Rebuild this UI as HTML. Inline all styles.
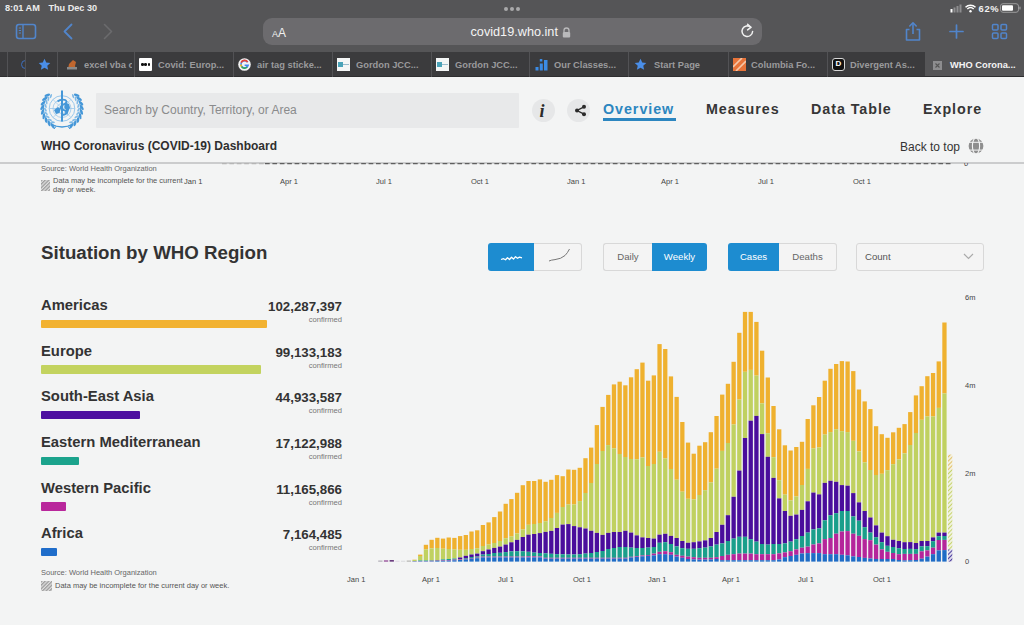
<!DOCTYPE html>
<html><head><meta charset="utf-8">
<style>
*{margin:0;padding:0;box-sizing:border-box}
html,body{width:1024px;height:625px;overflow:hidden;background:#f3f4f4;font-family:"Liberation Sans",sans-serif}
.a{position:absolute;white-space:nowrap;line-height:1}
.tb{position:absolute;top:52px;height:25px;width:1px;background:#525255}
.tt{position:absolute;top:60.5px;font-size:9.3px;font-weight:bold;color:#9a9a9c;line-height:1;white-space:nowrap}
.nav{position:absolute;top:102px;font-size:14.3px;font-weight:bold;color:#363636;letter-spacing:0.95px;line-height:1;white-space:nowrap}
.xl{position:absolute;font-size:7.5px;color:#444;line-height:1;white-space:nowrap}
.rn{position:absolute;left:41px;font-size:14.8px;font-weight:bold;color:#333;line-height:1;white-space:nowrap}
.rv{position:absolute;right:682px;font-size:13.3px;font-weight:bold;color:#333;line-height:1;white-space:nowrap}
.rc{position:absolute;right:682px;font-size:7.6px;color:#777;line-height:1;white-space:nowrap}
.bar{position:absolute;left:41px;height:8.5px;border-radius:1px}
.btn{position:absolute;top:242.5px;height:28px;font-size:9.6px;line-height:28px;text-align:center;color:#666}
</style></head><body>
<!-- ===== Safari chrome ===== -->
<div style="position:absolute;left:0;top:0;width:1024px;height:52px;background:#555557"></div>
<div class="a" style="left:5px;top:3.5px;font-size:9.2px;font-weight:bold;color:#ececec">8:01 AM</div>
<div class="a" style="left:48.5px;top:3.5px;font-size:9.1px;font-weight:bold;color:#ececec">Thu Dec 30</div>
<div style="position:absolute;left:504px;top:7px;width:4px;height:4px;border-radius:50%;background:#a9a9ab"></div>
<div style="position:absolute;left:510px;top:7px;width:4px;height:4px;border-radius:50%;background:#a9a9ab"></div>
<div style="position:absolute;left:516px;top:7px;width:4px;height:4px;border-radius:50%;background:#a9a9ab"></div>
<!-- sidebar icon -->
<svg style="position:absolute;left:15px;top:23px" width="23" height="18" viewBox="0 0 23 18"><rect x="1.5" y="1.5" width="19" height="14" rx="2.5" fill="none" stroke="#5185cb" stroke-width="1.6"/><line x1="8" y1="1.5" x2="8" y2="15.5" stroke="#5185cb" stroke-width="1.4"/><line x1="3.8" y1="5" x2="6" y2="5" stroke="#5185cb" stroke-width="1"/><line x1="3.8" y1="7.5" x2="6" y2="7.5" stroke="#5185cb" stroke-width="1"/><line x1="3.8" y1="10" x2="6" y2="10" stroke="#5185cb" stroke-width="1"/></svg>
<svg style="position:absolute;left:62px;top:23px" width="12" height="17" viewBox="0 0 12 17"><polyline points="9.5,1.5 2.5,8.5 9.5,15.5" fill="none" stroke="#5185cb" stroke-width="1.8" stroke-linecap="round" stroke-linejoin="round"/></svg>
<svg style="position:absolute;left:102px;top:23px" width="12" height="17" viewBox="0 0 12 17"><polyline points="2.5,1.5 9.5,8.5 2.5,15.5" fill="none" stroke="#6b6b6d" stroke-width="1.6" stroke-linecap="round" stroke-linejoin="round"/></svg>
<!-- url -->
<div style="position:absolute;left:263px;top:18px;width:499px;height:27px;border-radius:9px;background:#6c6b6e"></div>
<div class="a" style="left:272px;top:27.5px;font-size:9px;color:#f0f0f0;line-height:11px">A<span style="font-size:12px">A</span></div>
<div class="a" style="left:470.5px;top:25.5px;font-size:12.7px;color:#f4f4f4">covid19.who.int</div>
<svg style="position:absolute;left:562px;top:26.5px" width="9" height="11" viewBox="0 0 9 11"><path d="M2 5V3.5a2.5 2.5 0 0 1 5 0V5" fill="none" stroke="#b9b9bb" stroke-width="1.3"/><rect x="0.8" y="5" width="7.4" height="5.5" rx="1" fill="#b9b9bb"/></svg>
<svg style="position:absolute;left:740px;top:23px" width="15" height="16" viewBox="0 0 15 16"><path d="M10.8 4.2A5.3 5.3 0 1 0 12.6 8.5" fill="none" stroke="#f0f0f0" stroke-width="1.5" stroke-linecap="round"/><polyline points="7.6,1.2 10.9,4.3 7.6,6.9" fill="none" stroke="#f0f0f0" stroke-width="1.5" stroke-linecap="round" stroke-linejoin="round"/></svg>
<!-- right icons -->
<svg style="position:absolute;left:903px;top:21px" width="20" height="21" viewBox="0 0 20 21"><path d="M6.5 8.5H3.5V19H16.5V8.5H13.5" fill="none" stroke="#5185cb" stroke-width="1.6" stroke-linejoin="round"/><line x1="10" y1="2" x2="10" y2="13" stroke="#5185cb" stroke-width="1.6"/><polyline points="6.8,5 10,1.8 13.2,5" fill="none" stroke="#5185cb" stroke-width="1.6" stroke-linecap="round" stroke-linejoin="round"/></svg>
<svg style="position:absolute;left:949px;top:24px" width="15" height="15" viewBox="0 0 15 15"><line x1="7.5" y1="1" x2="7.5" y2="14" stroke="#5185cb" stroke-width="1.7" stroke-linecap="round"/><line x1="1" y1="7.5" x2="14" y2="7.5" stroke="#5185cb" stroke-width="1.7" stroke-linecap="round"/></svg>
<svg style="position:absolute;left:991px;top:23px" width="17" height="17" viewBox="0 0 17 17"><rect x="1.5" y="1.5" width="5.5" height="5.5" rx="1" fill="none" stroke="#5185cb" stroke-width="1.5"/><rect x="10" y="1.5" width="5.5" height="5.5" rx="1" fill="none" stroke="#5185cb" stroke-width="1.5"/><rect x="1.5" y="10" width="5.5" height="5.5" rx="1" fill="none" stroke="#5185cb" stroke-width="1.5"/><rect x="10" y="10" width="5.5" height="5.5" rx="1" fill="none" stroke="#5185cb" stroke-width="1.5"/></svg>
<!-- status right -->
<svg style="position:absolute;left:949px;top:3px" width="72" height="10" viewBox="0 0 72 10"><rect x="1.5" y="6" width="2" height="3.5" fill="#fff"/><rect x="4.5" y="4.5" width="2" height="5" fill="#8e8e90"/><rect x="7.5" y="3" width="2" height="6.5" fill="#8e8e90"/><rect x="10.5" y="1.5" width="2" height="8" fill="#8e8e90"/>
<path d="M16.5 4.2a7.5 7.5 0 0 1 10 0" fill="none" stroke="#fff" stroke-width="1.5"/><path d="M18.3 6a4.8 4.8 0 0 1 6.4 0" fill="none" stroke="#fff" stroke-width="1.5"/><circle cx="21.5" cy="8.3" r="1.2" fill="#fff"/>
<rect x="51.5" y="0.7" width="18" height="8.6" rx="2.5" fill="none" stroke="#9a9a9c" stroke-width="1"/><rect x="53" y="2.2" width="11" height="5.6" rx="1" fill="#fff"/><rect x="70.3" y="3.5" width="1.3" height="3" rx="0.6" fill="#9a9a9c"/></svg>
<div class="a" style="left:978.5px;top:3.8px;font-size:9.4px;font-weight:bold;color:#f2f2f2;letter-spacing:0.7px">62%</div>
<!-- ===== tab bar ===== -->
<div style="position:absolute;left:0;top:52px;width:1024px;height:25px;background:#3b3b3d"></div>
<div style="position:absolute;left:925px;top:52px;width:99px;height:25px;background:#555557"></div>
<div style="position:absolute;left:0;top:76px;width:1024px;height:1px;background:#2e2e30"></div>
<div class="tb" style="left:7px"></div><div class="tb" style="left:25px"></div><div class="tb" style="left:57px"></div><div class="tb" style="left:134px"></div><div class="tb" style="left:233px"></div><div class="tb" style="left:332px"></div><div class="tb" style="left:431px"></div><div class="tb" style="left:529px"></div><div class="tb" style="left:628px"></div><div class="tb" style="left:728px"></div><div class="tb" style="left:827px"></div>
<!-- tab icons -->
<div style="position:absolute;left:8px;top:52px;width:17px;height:25px;overflow:hidden"><div style="position:absolute;left:13px;top:8px;width:9px;height:9px;border-radius:50%;border:1.5px solid #3c6fc0"></div></div>
<svg style="position:absolute;left:38px;top:58px" width="13" height="13" viewBox="0 0 24 24"><path d="M12 1.5l3.2 6.9 7.5.8-5.6 5.1 1.6 7.4L12 17.9l-6.7 3.8 1.6-7.4L1.3 9.2l7.5-.8z" fill="#4a8ee8"/></svg>
<svg style="position:absolute;left:66px;top:58px" width="12" height="12" viewBox="0 0 12 12"><path d="M2 11 L3 6 L7 2 L10 4 L9 8 L10 11Z" fill="#c0662e"/><rect x="1" y="9" width="10" height="2.5" fill="#8a8a8a"/></svg>
<div style="position:absolute;left:139px;top:58px;width:13px;height:13px;background:#fff;border-radius:1px"><span style="position:absolute;left:2px;top:5px;width:2.5px;height:2.5px;background:#111;border-radius:50%"></span><span style="position:absolute;left:5.3px;top:5px;width:2.5px;height:2.5px;background:#111;border-radius:50%"></span><span style="position:absolute;left:8.6px;top:5px;width:2.5px;height:2.5px;background:#111;border-radius:50%"></span></div>
<svg style="position:absolute;left:238px;top:58px" width="13" height="13" viewBox="0 0 13 13"><circle cx="6.5" cy="6.5" r="6.3" fill="#f2f2f2"/><path d="M9.6 4.2A3.6 3.6 0 1 0 10.1 7.2H6.6" fill="none" stroke="#4285f4" stroke-width="1.6"/><path d="M3.1 4.6A3.6 3.6 0 0 1 9.6 4.2" fill="none" stroke="#ea4335" stroke-width="1.6"/><path d="M2.9 6.5A3.6 3.6 0 0 0 3.5 8.6" fill="none" stroke="#fbbc05" stroke-width="1.6"/><path d="M3.5 8.6A3.6 3.6 0 0 0 9.2 9" fill="none" stroke="#34a853" stroke-width="1.6"/></svg>
<div style="position:absolute;left:337px;top:58px;width:13px;height:13px;background:#f4f6f6"><span style="position:absolute;left:1px;top:4px;width:5px;height:5px;background:#4aa3b8"></span><span style="position:absolute;left:6px;top:6px;width:6px;height:1px;background:#9bc"></span></div>
<div style="position:absolute;left:436px;top:58px;width:13px;height:13px;background:#f4f6f6"><span style="position:absolute;left:1px;top:4px;width:5px;height:5px;background:#4aa3b8"></span><span style="position:absolute;left:6px;top:6px;width:6px;height:1px;background:#9bc"></span></div>
<svg style="position:absolute;left:535px;top:58px" width="13" height="13" viewBox="0 0 13 13"><rect x="0.5" y="9" width="3" height="3.5" fill="#3b8be6"/><rect x="4.8" y="5.5" width="3" height="7" fill="#3b8be6"/><rect x="9" y="2" width="3.5" height="10.5" fill="#3b8be6"/><rect x="4.8" y="1" width="2.5" height="2.5" fill="#3b8be6"/></svg>
<svg style="position:absolute;left:634px;top:58px" width="13" height="13" viewBox="0 0 24 24"><path d="M12 1.5l3.2 6.9 7.5.8-5.6 5.1 1.6 7.4L12 17.9l-6.7 3.8 1.6-7.4L1.3 9.2l7.5-.8z" fill="#4a8ee8"/></svg>
<svg style="position:absolute;left:733px;top:58px" width="13" height="13" viewBox="0 0 13 13"><rect width="13" height="13" fill="#e8743a"/><path d="M0 9L9 0M3 13L13 3" stroke="#f6c7a8" stroke-width="1.6"/></svg>
<div style="position:absolute;left:832px;top:58px;width:13px;height:13px;border:1.5px solid #d8d8d8;border-radius:3px;background:#111;color:#fff;font-size:8px;font-weight:bold;line-height:10px;text-align:center">D</div>
<div style="position:absolute;left:933px;top:61px;width:9px;height:9px;background:#8d8d8f"><svg style="position:absolute;left:0;top:0" width="9" height="9"><path d="M2.5 2.5L6.5 6.5M6.5 2.5L2.5 6.5" stroke="#555" stroke-width="1.1"/></svg></div>
<!-- tab texts -->
<div style="position:absolute;left:84px;top:52px;width:48px;height:25px;overflow:hidden"><div class="tt" style="left:0;top:8.5px">excel vba c</div></div>
<div class="tt" style="left:158px">Covid: Europ...</div>
<div class="tt" style="left:257px">air tag sticke...</div>
<div class="tt" style="left:356px">Gordon JCC...</div>
<div class="tt" style="left:455px">Gordon JCC...</div>
<div class="tt" style="left:554px">Our Classes...</div>
<div class="tt" style="left:654px">Start Page</div>
<div class="tt" style="left:751px">Columbia Fo...</div>
<div class="tt" style="left:850px">Divergent As...</div>
<div class="tt" style="left:950px;color:#f4f4f4">WHO Corona...</div>
<!-- ===== page header ===== -->
<svg style="position:absolute;left:39px;top:89px" width="46" height="41" viewBox="0 0 46 41">
<g fill="none" stroke="#8fc2ea">
<circle cx="23" cy="19.5" r="12.8" stroke-width="0.9"/><circle cx="23" cy="19.5" r="9" stroke-width="0.7"/><circle cx="23" cy="19.5" r="5" stroke-width="0.7"/>
<line x1="10.2" y1="19.5" x2="35.8" y2="19.5" stroke-width="0.7"/><line x1="14" y1="10.5" x2="32" y2="28.5" stroke-width="0.6"/><line x1="32" y1="10.5" x2="14" y2="28.5" stroke-width="0.6"/>
</g>
<path d="M16.67 36.88 L15.85 36.56 L15.04 36.20 L14.24 35.80 L13.47 35.36 L12.72 34.88 L12.00 34.37 L11.29 33.83 L10.62 33.25 L9.98 32.64 L9.36 32.00 L8.78 31.33 L8.23 30.63 L7.71 29.91 L7.23 29.17 L6.78 28.40 L6.37 27.61 L6.00 26.80 L5.67 25.98 L5.38 25.14 L5.13 24.29 L4.92 23.43 L4.75 22.55 L4.63 21.67 L4.55 20.79 L4.50 19.90 L4.51 19.02 L4.55 18.13 L4.64 17.25 L4.77 16.37 L4.94 15.50 L5.15 14.63 L5.41 13.78 L5.70 12.95 L6.03 12.12 L6.41 11.32 L6.82 10.53 L7.27 9.77 L7.75 9.02 L8.27 8.30 L8.83 7.61" fill="none" stroke="#4597d8" stroke-width="1"/><ellipse cx="13.70" cy="36.98" rx="3" ry="1.25" transform="rotate(-124.0 13.70 36.98)" fill="#4597d8"/><ellipse cx="13.72" cy="33.26" rx="2.2" ry="0.9" transform="rotate(-174.0 13.72 33.26)" fill="#7fb9e6"/><ellipse cx="10.01" cy="34.44" rx="3" ry="1.25" transform="rotate(-111.0 10.01 34.44)" fill="#4597d8"/><ellipse cx="10.86" cy="30.82" rx="2.2" ry="0.9" transform="rotate(-161.0 10.86 30.82)" fill="#7fb9e6"/><ellipse cx="6.98" cy="31.14" rx="3" ry="1.25" transform="rotate(-98.0 6.98 31.14)" fill="#4597d8"/><ellipse cx="8.62" cy="27.80" rx="2.2" ry="0.9" transform="rotate(-148.0 8.62 27.80)" fill="#7fb9e6"/><ellipse cx="4.77" cy="27.24" rx="3" ry="1.25" transform="rotate(-85.0 4.77 27.24)" fill="#4597d8"/><ellipse cx="7.13" cy="24.35" rx="2.2" ry="0.9" transform="rotate(-135.0 7.13 24.35)" fill="#7fb9e6"/><ellipse cx="3.50" cy="22.94" rx="3" ry="1.25" transform="rotate(-72.0 3.50 22.94)" fill="#4597d8"/><ellipse cx="6.44" cy="20.66" rx="2.2" ry="0.9" transform="rotate(-122.0 6.44 20.66)" fill="#7fb9e6"/><ellipse cx="3.23" cy="18.46" rx="3" ry="1.25" transform="rotate(-59.0 3.23 18.46)" fill="#4597d8"/><ellipse cx="6.60" cy="16.90" rx="2.2" ry="0.9" transform="rotate(-109.0 6.60 16.90)" fill="#7fb9e6"/><ellipse cx="3.97" cy="14.04" rx="3" ry="1.25" transform="rotate(-46.0 3.97 14.04)" fill="#4597d8"/><ellipse cx="7.61" cy="13.28" rx="2.2" ry="0.9" transform="rotate(-96.0 7.61 13.28)" fill="#7fb9e6"/><ellipse cx="5.68" cy="9.90" rx="3" ry="1.25" transform="rotate(-33.0 5.68 9.90)" fill="#4597d8"/><ellipse cx="9.40" cy="9.98" rx="2.2" ry="0.9" transform="rotate(-83.0 9.40 9.98)" fill="#7fb9e6"/><ellipse cx="8.29" cy="6.25" rx="3" ry="1.25" transform="rotate(-20.0 8.29 6.25)" fill="#4597d8"/><ellipse cx="11.89" cy="7.16" rx="2.2" ry="0.9" transform="rotate(-70.0 11.89 7.16)" fill="#7fb9e6"/><path d="M29.33 36.88 L30.15 36.56 L30.96 36.20 L31.76 35.80 L32.53 35.36 L33.28 34.88 L34.00 34.37 L34.71 33.83 L35.38 33.25 L36.02 32.64 L36.64 32.00 L37.22 31.33 L37.77 30.63 L38.29 29.91 L38.77 29.17 L39.22 28.40 L39.63 27.61 L40.00 26.80 L40.33 25.98 L40.62 25.14 L40.87 24.29 L41.08 23.43 L41.25 22.55 L41.37 21.67 L41.45 20.79 L41.50 19.90 L41.49 19.02 L41.45 18.13 L41.36 17.25 L41.23 16.37 L41.06 15.50 L40.85 14.63 L40.59 13.78 L40.30 12.95 L39.97 12.12 L39.59 11.32 L39.18 10.53 L38.73 9.77 L38.25 9.02 L37.73 8.30 L37.17 7.61" fill="none" stroke="#4597d8" stroke-width="1"/><ellipse cx="32.30" cy="36.98" rx="3" ry="1.25" transform="rotate(-56.0 32.30 36.98)" fill="#4597d8"/><ellipse cx="32.28" cy="33.26" rx="2.2" ry="0.9" transform="rotate(-6.0 32.28 33.26)" fill="#7fb9e6"/><ellipse cx="35.99" cy="34.44" rx="3" ry="1.25" transform="rotate(-69.0 35.99 34.44)" fill="#4597d8"/><ellipse cx="35.14" cy="30.82" rx="2.2" ry="0.9" transform="rotate(-19.0 35.14 30.82)" fill="#7fb9e6"/><ellipse cx="39.02" cy="31.14" rx="3" ry="1.25" transform="rotate(-82.0 39.02 31.14)" fill="#4597d8"/><ellipse cx="37.38" cy="27.80" rx="2.2" ry="0.9" transform="rotate(-32.0 37.38 27.80)" fill="#7fb9e6"/><ellipse cx="41.23" cy="27.24" rx="3" ry="1.25" transform="rotate(-95.0 41.23 27.24)" fill="#4597d8"/><ellipse cx="38.87" cy="24.35" rx="2.2" ry="0.9" transform="rotate(-45.0 38.87 24.35)" fill="#7fb9e6"/><ellipse cx="42.50" cy="22.94" rx="3" ry="1.25" transform="rotate(-108.0 42.50 22.94)" fill="#4597d8"/><ellipse cx="39.56" cy="20.66" rx="2.2" ry="0.9" transform="rotate(-58.0 39.56 20.66)" fill="#7fb9e6"/><ellipse cx="42.77" cy="18.46" rx="3" ry="1.25" transform="rotate(-121.0 42.77 18.46)" fill="#4597d8"/><ellipse cx="39.40" cy="16.90" rx="2.2" ry="0.9" transform="rotate(-71.0 39.40 16.90)" fill="#7fb9e6"/><ellipse cx="42.03" cy="14.04" rx="3" ry="1.25" transform="rotate(-134.0 42.03 14.04)" fill="#4597d8"/><ellipse cx="38.39" cy="13.28" rx="2.2" ry="0.9" transform="rotate(-84.0 38.39 13.28)" fill="#7fb9e6"/><ellipse cx="40.32" cy="9.90" rx="3" ry="1.25" transform="rotate(-147.0 40.32 9.90)" fill="#4597d8"/><ellipse cx="36.60" cy="9.98" rx="2.2" ry="0.9" transform="rotate(-97.0 36.60 9.98)" fill="#7fb9e6"/><ellipse cx="37.71" cy="6.25" rx="3" ry="1.25" transform="rotate(-160.0 37.71 6.25)" fill="#4597d8"/><ellipse cx="34.11" cy="7.16" rx="2.2" ry="0.9" transform="rotate(-110.0 34.11 7.16)" fill="#7fb9e6"/>
<g fill="#4597d8">
<path d="M15 21l4-3 2.5 2-1 4-3.5 1zM26 13.5l4 1.5 1 3.5-1.2 3-1.6 4.5-2-2 .5-3.5-1.5-2z"/>
<rect x="22" y="1.5" width="2" height="31"/>
<path d="M18.5 12.5c3-2.5 8.5-2.8 9 .2c.4 2.6-6 3-6 5.8c0 2.6 6 2.2 6 4.8c0 2-3 2.7-5.5 2.7" fill="none" stroke="#4597d8" stroke-width="1.8"/>
<path d="M12 35.5c4 1.5 7 2.2 11 2.5c4-.3 7-1 11-2.5" fill="none" stroke="#4597d8" stroke-width="1.3"/>
<path d="M17 37.5l-2 2.5M29 37.5l2 2.5" stroke="#4597d8" stroke-width="1"/>
</g>
</svg>
<div style="position:absolute;left:96px;top:92.5px;width:423px;height:35px;background:#e8e9ea;border-radius:1px"></div>
<div class="a" style="left:104px;top:104px;font-size:12px;color:#8a8b8c">Search by Country, Territory, or Area</div>
<div style="position:absolute;left:531.5px;top:99px;width:23px;height:23px;border-radius:50%;background:#e6e7e8"></div>
<div class="a" style="left:539.5px;top:102px;font-family:'Liberation Serif',serif;font-style:italic;font-weight:bold;font-size:18px;color:#2b2b2b">i</div>
<div style="position:absolute;left:567px;top:99px;width:23px;height:23px;border-radius:50%;background:#e6e7e8"></div>
<svg style="position:absolute;left:573.5px;top:103.5px" width="13" height="13" viewBox="0 0 13 13"><circle cx="10" cy="2.8" r="2" fill="#2b2b2b"/><circle cx="3" cy="6.5" r="2" fill="#2b2b2b"/><circle cx="10" cy="10.2" r="2" fill="#2b2b2b"/><path d="M10 2.8L3 6.5L10 10.2" fill="none" stroke="#2b2b2b" stroke-width="1.4"/></svg>
<div class="nav" style="left:603px;color:#2c86c0">Overview</div>
<div style="position:absolute;left:603px;top:118px;width:73px;height:2.5px;background:#2c86c0"></div>
<div class="nav" style="left:706px">Measures</div>
<div class="nav" style="left:811px">Data Table</div>
<div class="nav" style="left:923px">Explore</div>
<div class="a" style="left:41px;top:140px;font-size:12px;font-weight:bold;color:#2f2f2f">WHO Coronavirus (COVID-19) Dashboard</div>
<div class="a" style="left:900px;top:140.5px;font-size:12px;color:#333">Back to top</div>
<svg style="position:absolute;left:968px;top:138px" width="16" height="16" viewBox="0 0 16 16"><circle cx="8" cy="8" r="7.4" fill="#8e8e8e"/><ellipse cx="8" cy="8" rx="3.6" ry="8" fill="none" stroke="#f3f4f4" stroke-width="1.1"/><line x1="0" y1="4.3" x2="16" y2="4.3" stroke="#f3f4f4" stroke-width="1"/><line x1="0" y1="12.1" x2="16" y2="12.1" stroke="#f3f4f4" stroke-width="1"/></svg>
<!-- header bottom line & previous chart remnant -->
<div style="position:absolute;left:0;top:162px;width:1024px;height:1.8px;background:#cbcccd"></div>
<svg style="position:absolute;left:0;top:160.5px" width="1024" height="8"><line x1="222" y1="2.6" x2="265" y2="2.6" stroke="#b5b5b5" stroke-width="1.4" stroke-dasharray="4.7 2.7"/><line x1="265" y1="2.6" x2="953" y2="2.6" stroke="#5f5f5f" stroke-width="1.4" stroke-dasharray="4.7 2.7"/></svg>
<div style="position:absolute;left:960px;top:163px;width:14px;height:5px;overflow:hidden"><div class="xl" style="left:4px;top:-3px">0</div></div>
<div class="xl" style="left:41px;top:165px;color:#666">Source: World Health Organization</div>
<svg style="position:absolute;left:41px;top:180px" width="9" height="11"><defs><pattern id="hh" width="2.5" height="2.5" patternUnits="userSpaceOnUse" patternTransform="rotate(45)"><rect width="2.5" height="2.5" fill="#ddd"/><rect width="1.2" height="2.5" fill="#999"/></pattern></defs><rect width="9" height="11" fill="url(#hh)"/></svg>
<div class="xl" style="left:53px;top:177px;color:#555">Data may be incomplete for the current</div>
<div class="xl" style="left:53px;top:186px;color:#555">day or week.</div>
<div class="xl" style="left:184px;top:178px">Jan 1</div>
<div class="xl" style="left:280px;top:178px">Apr 1</div>
<div class="xl" style="left:376px;top:178px">Jul 1</div>
<div class="xl" style="left:471px;top:178px">Oct 1</div>
<div class="xl" style="left:567px;top:178px">Jan 1</div>
<div class="xl" style="left:661px;top:178px">Apr 1</div>
<div class="xl" style="left:758px;top:178px">Jul 1</div>
<div class="xl" style="left:853px;top:178px">Oct 1</div>
<!-- ===== Situation by WHO Region ===== -->
<div class="a" style="left:41px;top:244px;font-size:18.7px;font-weight:bold;color:#333">Situation by WHO Region</div>
<div class="rn" style="top:298px">Americas</div>
<div class="bar" style="top:319.6px;width:226px;background:#f2b231"></div>
<div class="rv" style="top:300px">102,287,397</div><div class="rc" style="top:316px">confirmed</div>
<div class="rn" style="top:344px">Europe</div>
<div class="bar" style="top:365.1px;width:219.5px;background:#c3d35f"></div>
<div class="rv" style="top:346px">99,133,183</div><div class="rc" style="top:362px">confirmed</div>
<div class="rn" style="top:389px">South-East Asia</div>
<div class="bar" style="top:410.6px;width:99px;background:#4d0ea0"></div>
<div class="rv" style="top:391px">44,933,587</div><div class="rc" style="top:407px">confirmed</div>
<div class="rn" style="top:435px">Eastern Mediterranean</div>
<div class="bar" style="top:456.6px;width:38px;background:#1ba38c"></div>
<div class="rv" style="top:437px">17,122,988</div><div class="rc" style="top:453px">confirmed</div>
<div class="rn" style="top:481px">Western Pacific</div>
<div class="bar" style="top:502.1px;width:24.5px;background:#b9279c"></div>
<div class="rv" style="top:483px">11,165,866</div><div class="rc" style="top:499px">confirmed</div>
<div class="rn" style="top:526px">Africa</div>
<div class="bar" style="top:547.9px;width:15.5px;background:#1f6dca"></div>
<div class="rv" style="top:528px">7,164,485</div><div class="rc" style="top:544px">confirmed</div>
<div class="xl" style="left:41px;top:569px;color:#666">Source: World Health Organization</div>
<svg style="position:absolute;left:41px;top:581px" width="11" height="10"><rect width="11" height="10" fill="url(#hh)"/></svg>
<div class="xl" style="left:55px;top:582px;color:#555">Data may be incomplete for the current day or week.</div>
<!-- controls -->
<div style="position:absolute;left:488px;top:242.5px;width:46px;height:28px;background:#1d8cd0;border-radius:3px 0 0 3px"></div>
<svg style="position:absolute;left:499px;top:250.5px" width="25" height="12" viewBox="0 0 25 12"><path d="M2.0 8.5 L4.5 7.7 L6.5 8.8 L8.5 6.7 L10.5 8.5 L12.5 6.3 L14.5 8.1 L16.5 5.7 L18.5 7.3 L20.5 6.1 L23.0 6.8" fill="none" stroke="#fff" stroke-width="1.3" stroke-linejoin="round"/></svg>
<div style="position:absolute;left:534px;top:242.5px;width:48px;height:28px;border:1px solid #d8d8d8;border-left:none;border-radius:0 3px 3px 0;background:#f4f4f4"></div>
<svg style="position:absolute;left:547px;top:247px" width="25" height="16" viewBox="0 0 25 16"><path d="M2 14 Q4 13 8 12.6 Q14 12 18 8.5 Q20.5 6 22.5 2" fill="none" stroke="#777" stroke-width="1"/></svg>
<div class="btn" style="left:603px;width:49px;border:1px solid #d8d8d8;border-right:none;border-radius:3px 0 0 3px;background:#f4f4f4;line-height:26px">Daily</div>
<div class="btn" style="left:652px;width:55px;background:#1d8cd0;color:#fff;border-radius:0 3px 3px 0">Weekly</div>
<div class="btn" style="left:728px;width:51px;background:#1d8cd0;color:#fff;border-radius:3px 0 0 3px">Cases</div>
<div class="btn" style="left:779px;width:58px;border:1px solid #d8d8d8;border-left:none;border-radius:0 3px 3px 0;background:#f4f4f4;line-height:26px">Deaths</div>
<div class="btn" style="left:856px;width:128px;border:1px solid #d8d8d8;border-radius:3px;background:#f4f4f4;text-align:left;padding-left:8px;color:#555;line-height:26px">Count</div>
<svg style="position:absolute;left:963px;top:253px" width="11" height="7"><polyline points="1,1 5.5,5.5 10,1" fill="none" stroke="#aaa" stroke-width="1.2"/></svg>
<!-- y-axis labels -->
<div class="xl" style="left:965px;top:294px">6m</div>
<div class="xl" style="left:965px;top:382px">4m</div>
<div class="xl" style="left:965px;top:470px">2m</div>
<div class="xl" style="left:965px;top:558px">0</div>
<div class="xl" style="left:347px;top:576px">Jan 1</div>
<div class="xl" style="left:422px;top:576px">Apr 1</div>
<div class="xl" style="left:498px;top:576px">Jul 1</div>
<div class="xl" style="left:573px;top:576px">Oct 1</div>
<div class="xl" style="left:648px;top:576px">Jan 1</div>
<div class="xl" style="left:722px;top:576px">Apr 1</div>
<div class="xl" style="left:798px;top:576px">Jul 1</div>
<div class="xl" style="left:873px;top:576px">Oct 1</div>
<svg style="position:absolute;left:0;top:0" width="1024" height="625" viewBox="0 0 1024 625"><defs>
<pattern id="hy" width="3" height="3" patternUnits="userSpaceOnUse" patternTransform="rotate(45)"><rect width="3" height="3" fill="#f4f1de"/><rect width="1" height="3" fill="#e2c168"/></pattern>
<pattern id="hg" width="3" height="3" patternUnits="userSpaceOnUse" patternTransform="rotate(45)"><rect width="3" height="3" fill="#f0f2de"/><rect width="1" height="3" fill="#c6d36e"/></pattern>
<pattern id="hb" width="3" height="3" patternUnits="userSpaceOnUse" patternTransform="rotate(45)"><rect width="3" height="3" fill="#e6e2f0"/><rect width="1.1" height="3" fill="#4a3c9c"/></pattern>
</defs><rect x="378.20" y="560.6" width="4.3" height="1.00" fill="#a3a0ab"/><rect x="383.90" y="560.4" width="4.3" height="1.20" fill="#8c3d8f"/><rect x="389.60" y="560.1" width="4.3" height="1.50" fill="#5d2a73"/><rect x="395.29" y="560.8" width="4.3" height="0.80" fill="#dccfe0"/><rect x="400.99" y="560.8" width="4.3" height="0.80" fill="#d3d3d6"/><rect x="406.69" y="560.6" width="4.3" height="1.00" fill="#a8a8a4"/><rect x="412.39" y="559.70" width="4.3" height="0.30" fill="#efb12f"/><rect x="412.39" y="560.00" width="4.3" height="1.00" fill="#c0d160"/><rect x="412.39" y="561.00" width="4.3" height="0.20" fill="#1a9f8b"/><rect x="412.39" y="561.20" width="4.3" height="0.20" fill="#b5259b"/><rect x="412.39" y="561.40" width="4.3" height="0.20" fill="#1f6cc6"/><rect x="418.09" y="554.60" width="4.3" height="1.40" fill="#efb12f"/><rect x="418.09" y="556.00" width="4.3" height="4.50" fill="#c0d160"/><rect x="418.09" y="560.50" width="4.3" height="0.50" fill="#1a9f8b"/><rect x="418.09" y="561.00" width="4.3" height="0.20" fill="#b5259b"/><rect x="418.09" y="561.20" width="4.3" height="0.40" fill="#1f6cc6"/><rect x="423.78" y="544.80" width="4.3" height="4.70" fill="#efb12f"/><rect x="423.78" y="549.50" width="4.3" height="11.00" fill="#c0d160"/><rect x="423.78" y="560.50" width="4.3" height="0.50" fill="#1a9f8b"/><rect x="423.78" y="561.00" width="4.3" height="0.20" fill="#b5259b"/><rect x="423.78" y="561.20" width="4.3" height="0.40" fill="#1f6cc6"/><rect x="429.48" y="539.80" width="4.3" height="8.60" fill="#efb12f"/><rect x="429.48" y="548.40" width="4.3" height="11.90" fill="#c0d160"/><rect x="429.48" y="560.30" width="4.3" height="0.50" fill="#1a9f8b"/><rect x="429.48" y="560.80" width="4.3" height="0.40" fill="#b5259b"/><rect x="429.48" y="561.20" width="4.3" height="0.40" fill="#1f6cc6"/><rect x="435.18" y="537.80" width="4.3" height="10.20" fill="#efb12f"/><rect x="435.18" y="548.00" width="4.3" height="12.00" fill="#c0d160"/><rect x="435.18" y="560.00" width="4.3" height="0.60" fill="#1a9f8b"/><rect x="435.18" y="560.60" width="4.3" height="0.40" fill="#b5259b"/><rect x="435.18" y="561.00" width="4.3" height="0.60" fill="#1f6cc6"/><rect x="440.88" y="538.60" width="4.3" height="10.10" fill="#efb12f"/><rect x="440.88" y="548.70" width="4.3" height="10.70" fill="#c0d160"/><rect x="440.88" y="559.40" width="4.3" height="0.90" fill="#1a9f8b"/><rect x="440.88" y="560.30" width="4.3" height="0.50" fill="#b5259b"/><rect x="440.88" y="560.80" width="4.3" height="0.80" fill="#1f6cc6"/><rect x="446.58" y="537.50" width="4.3" height="11.50" fill="#efb12f"/><rect x="446.58" y="549.00" width="4.3" height="10.00" fill="#c0d160"/><rect x="446.58" y="559.00" width="4.3" height="1.00" fill="#1a9f8b"/><rect x="446.58" y="560.00" width="4.3" height="0.60" fill="#b5259b"/><rect x="446.58" y="560.60" width="4.3" height="1.00" fill="#1f6cc6"/><rect x="452.27" y="537.90" width="4.3" height="11.60" fill="#efb12f"/><rect x="452.27" y="549.50" width="4.3" height="9.00" fill="#c0d160"/><rect x="452.27" y="558.50" width="4.3" height="1.10" fill="#1a9f8b"/><rect x="452.27" y="559.60" width="4.3" height="0.70" fill="#b5259b"/><rect x="452.27" y="560.30" width="4.3" height="1.30" fill="#1f6cc6"/><rect x="457.97" y="536.10" width="4.3" height="13.70" fill="#efb12f"/><rect x="457.97" y="549.80" width="4.3" height="7.70" fill="#c0d160"/><rect x="457.97" y="557.50" width="4.3" height="1.50" fill="#4a0d9c"/><rect x="457.97" y="559.00" width="4.3" height="0.50" fill="#1a9f8b"/><rect x="457.97" y="559.50" width="4.3" height="0.50" fill="#b5259b"/><rect x="457.97" y="560.00" width="4.3" height="1.60" fill="#1f6cc6"/><rect x="463.67" y="535.00" width="4.3" height="14.80" fill="#efb12f"/><rect x="463.67" y="549.80" width="4.3" height="6.00" fill="#c0d160"/><rect x="463.67" y="555.80" width="4.3" height="2.20" fill="#4a0d9c"/><rect x="463.67" y="558.00" width="4.3" height="0.80" fill="#1a9f8b"/><rect x="463.67" y="558.80" width="4.3" height="0.60" fill="#b5259b"/><rect x="463.67" y="559.40" width="4.3" height="2.20" fill="#1f6cc6"/><rect x="469.37" y="531.50" width="4.3" height="17.50" fill="#efb12f"/><rect x="469.37" y="549.00" width="4.3" height="5.50" fill="#c0d160"/><rect x="469.37" y="554.50" width="4.3" height="2.50" fill="#4a0d9c"/><rect x="469.37" y="557.00" width="4.3" height="1.00" fill="#1a9f8b"/><rect x="469.37" y="558.00" width="4.3" height="0.60" fill="#b5259b"/><rect x="469.37" y="558.60" width="4.3" height="3.00" fill="#1f6cc6"/><rect x="475.07" y="530.30" width="4.3" height="18.00" fill="#efb12f"/><rect x="475.07" y="548.30" width="4.3" height="5.30" fill="#c0d160"/><rect x="475.07" y="553.60" width="4.3" height="2.90" fill="#4a0d9c"/><rect x="475.07" y="556.50" width="4.3" height="1.10" fill="#1a9f8b"/><rect x="475.07" y="557.60" width="4.3" height="0.60" fill="#b5259b"/><rect x="475.07" y="558.20" width="4.3" height="3.40" fill="#1f6cc6"/><rect x="480.76" y="525.00" width="4.3" height="21.00" fill="#efb12f"/><rect x="480.76" y="546.00" width="4.3" height="5.20" fill="#c0d160"/><rect x="480.76" y="551.20" width="4.3" height="3.40" fill="#4a0d9c"/><rect x="480.76" y="554.60" width="4.3" height="2.00" fill="#1a9f8b"/><rect x="480.76" y="556.60" width="4.3" height="0.80" fill="#b5259b"/><rect x="480.76" y="557.40" width="4.3" height="4.20" fill="#1f6cc6"/><rect x="486.46" y="522.40" width="4.3" height="22.10" fill="#efb12f"/><rect x="486.46" y="544.50" width="4.3" height="5.00" fill="#c0d160"/><rect x="486.46" y="549.50" width="4.3" height="4.50" fill="#4a0d9c"/><rect x="486.46" y="554.00" width="4.3" height="2.60" fill="#1a9f8b"/><rect x="486.46" y="556.60" width="4.3" height="0.80" fill="#b5259b"/><rect x="486.46" y="557.40" width="4.3" height="4.20" fill="#1f6cc6"/><rect x="492.16" y="517.10" width="4.3" height="25.90" fill="#efb12f"/><rect x="492.16" y="543.00" width="4.3" height="4.90" fill="#c0d160"/><rect x="492.16" y="547.90" width="4.3" height="5.10" fill="#4a0d9c"/><rect x="492.16" y="553.00" width="4.3" height="3.60" fill="#1a9f8b"/><rect x="492.16" y="556.60" width="4.3" height="0.80" fill="#b5259b"/><rect x="492.16" y="557.40" width="4.3" height="4.20" fill="#1f6cc6"/><rect x="497.86" y="511.50" width="4.3" height="29.50" fill="#efb12f"/><rect x="497.86" y="541.00" width="4.3" height="5.60" fill="#c0d160"/><rect x="497.86" y="546.60" width="4.3" height="6.20" fill="#4a0d9c"/><rect x="497.86" y="552.80" width="4.3" height="3.80" fill="#1a9f8b"/><rect x="497.86" y="556.60" width="4.3" height="0.80" fill="#b5259b"/><rect x="497.86" y="557.40" width="4.3" height="4.20" fill="#1f6cc6"/><rect x="503.56" y="503.80" width="4.3" height="34.50" fill="#efb12f"/><rect x="503.56" y="538.30" width="4.3" height="6.30" fill="#c0d160"/><rect x="503.56" y="544.60" width="4.3" height="7.50" fill="#4a0d9c"/><rect x="503.56" y="552.10" width="4.3" height="4.50" fill="#1a9f8b"/><rect x="503.56" y="556.60" width="4.3" height="0.80" fill="#b5259b"/><rect x="503.56" y="557.40" width="4.3" height="4.20" fill="#1f6cc6"/><rect x="509.25" y="499.10" width="4.3" height="37.40" fill="#efb12f"/><rect x="509.25" y="536.50" width="4.3" height="5.80" fill="#c0d160"/><rect x="509.25" y="542.30" width="4.3" height="9.10" fill="#4a0d9c"/><rect x="509.25" y="551.40" width="4.3" height="5.20" fill="#1a9f8b"/><rect x="509.25" y="556.60" width="4.3" height="0.80" fill="#b5259b"/><rect x="509.25" y="557.40" width="4.3" height="4.20" fill="#1f6cc6"/><rect x="514.95" y="492.80" width="4.3" height="40.70" fill="#efb12f"/><rect x="514.95" y="533.50" width="4.3" height="6.40" fill="#c0d160"/><rect x="514.95" y="539.90" width="4.3" height="11.30" fill="#4a0d9c"/><rect x="514.95" y="551.20" width="4.3" height="5.40" fill="#1a9f8b"/><rect x="514.95" y="556.60" width="4.3" height="0.80" fill="#b5259b"/><rect x="514.95" y="557.40" width="4.3" height="4.20" fill="#1f6cc6"/><rect x="520.65" y="485.20" width="4.3" height="44.30" fill="#efb12f"/><rect x="520.65" y="529.50" width="4.3" height="7.50" fill="#c0d160"/><rect x="520.65" y="537.00" width="4.3" height="14.30" fill="#4a0d9c"/><rect x="520.65" y="551.30" width="4.3" height="5.30" fill="#1a9f8b"/><rect x="520.65" y="556.60" width="4.3" height="0.80" fill="#b5259b"/><rect x="520.65" y="557.40" width="4.3" height="4.20" fill="#1f6cc6"/><rect x="526.35" y="481.00" width="4.3" height="43.80" fill="#efb12f"/><rect x="526.35" y="524.80" width="4.3" height="9.90" fill="#c0d160"/><rect x="526.35" y="534.70" width="4.3" height="17.10" fill="#4a0d9c"/><rect x="526.35" y="551.80" width="4.3" height="4.50" fill="#1a9f8b"/><rect x="526.35" y="556.30" width="4.3" height="1.10" fill="#b5259b"/><rect x="526.35" y="557.40" width="4.3" height="4.20" fill="#1f6cc6"/><rect x="532.05" y="481.00" width="4.3" height="43.00" fill="#efb12f"/><rect x="532.05" y="524.00" width="4.3" height="10.00" fill="#c0d160"/><rect x="532.05" y="534.00" width="4.3" height="18.60" fill="#4a0d9c"/><rect x="532.05" y="552.60" width="4.3" height="3.70" fill="#1a9f8b"/><rect x="532.05" y="556.30" width="4.3" height="1.10" fill="#b5259b"/><rect x="532.05" y="557.40" width="4.3" height="4.20" fill="#1f6cc6"/><rect x="537.74" y="479.40" width="4.3" height="43.60" fill="#efb12f"/><rect x="537.74" y="523.00" width="4.3" height="10.10" fill="#c0d160"/><rect x="537.74" y="533.10" width="4.3" height="19.90" fill="#4a0d9c"/><rect x="537.74" y="553.00" width="4.3" height="3.50" fill="#1a9f8b"/><rect x="537.74" y="556.50" width="4.3" height="0.90" fill="#b5259b"/><rect x="537.74" y="557.40" width="4.3" height="4.20" fill="#1f6cc6"/><rect x="543.44" y="481.80" width="4.3" height="39.50" fill="#efb12f"/><rect x="543.44" y="521.30" width="4.3" height="10.60" fill="#c0d160"/><rect x="543.44" y="531.90" width="4.3" height="21.50" fill="#4a0d9c"/><rect x="543.44" y="553.40" width="4.3" height="4.40" fill="#1a9f8b"/><rect x="543.44" y="557.80" width="4.3" height="0.80" fill="#b5259b"/><rect x="543.44" y="558.60" width="4.3" height="3.00" fill="#1f6cc6"/><rect x="549.14" y="479.80" width="4.3" height="38.20" fill="#efb12f"/><rect x="549.14" y="518.00" width="4.3" height="12.90" fill="#c0d160"/><rect x="549.14" y="530.90" width="4.3" height="22.90" fill="#4a0d9c"/><rect x="549.14" y="553.80" width="4.3" height="4.00" fill="#1a9f8b"/><rect x="549.14" y="557.80" width="4.3" height="0.80" fill="#b5259b"/><rect x="549.14" y="558.60" width="4.3" height="3.00" fill="#1f6cc6"/><rect x="554.84" y="475.10" width="4.3" height="37.80" fill="#efb12f"/><rect x="554.84" y="512.90" width="4.3" height="15.10" fill="#c0d160"/><rect x="554.84" y="528.00" width="4.3" height="26.20" fill="#4a0d9c"/><rect x="554.84" y="554.20" width="4.3" height="3.60" fill="#1a9f8b"/><rect x="554.84" y="557.80" width="4.3" height="0.80" fill="#b5259b"/><rect x="554.84" y="558.60" width="4.3" height="3.00" fill="#1f6cc6"/><rect x="560.54" y="476.20" width="4.3" height="30.80" fill="#efb12f"/><rect x="560.54" y="507.00" width="4.3" height="17.60" fill="#c0d160"/><rect x="560.54" y="524.60" width="4.3" height="29.70" fill="#4a0d9c"/><rect x="560.54" y="554.30" width="4.3" height="3.50" fill="#1a9f8b"/><rect x="560.54" y="557.80" width="4.3" height="0.80" fill="#b5259b"/><rect x="560.54" y="558.60" width="4.3" height="3.00" fill="#1f6cc6"/><rect x="566.23" y="469.50" width="4.3" height="35.00" fill="#efb12f"/><rect x="566.23" y="504.50" width="4.3" height="19.60" fill="#c0d160"/><rect x="566.23" y="524.10" width="4.3" height="30.40" fill="#4a0d9c"/><rect x="566.23" y="554.50" width="4.3" height="3.30" fill="#1a9f8b"/><rect x="566.23" y="557.80" width="4.3" height="0.80" fill="#b5259b"/><rect x="566.23" y="558.60" width="4.3" height="3.00" fill="#1f6cc6"/><rect x="571.93" y="469.80" width="4.3" height="34.70" fill="#efb12f"/><rect x="571.93" y="504.50" width="4.3" height="21.60" fill="#c0d160"/><rect x="571.93" y="526.10" width="4.3" height="28.40" fill="#4a0d9c"/><rect x="571.93" y="554.50" width="4.3" height="3.30" fill="#1a9f8b"/><rect x="571.93" y="557.80" width="4.3" height="0.80" fill="#b5259b"/><rect x="571.93" y="558.60" width="4.3" height="3.00" fill="#1f6cc6"/><rect x="577.63" y="467.80" width="4.3" height="33.30" fill="#efb12f"/><rect x="577.63" y="501.10" width="4.3" height="26.20" fill="#c0d160"/><rect x="577.63" y="527.30" width="4.3" height="26.90" fill="#4a0d9c"/><rect x="577.63" y="554.20" width="4.3" height="3.60" fill="#1a9f8b"/><rect x="577.63" y="557.80" width="4.3" height="0.80" fill="#b5259b"/><rect x="577.63" y="558.60" width="4.3" height="3.00" fill="#1f6cc6"/><rect x="583.33" y="458.20" width="4.3" height="34.80" fill="#efb12f"/><rect x="583.33" y="493.00" width="4.3" height="35.50" fill="#c0d160"/><rect x="583.33" y="528.50" width="4.3" height="25.10" fill="#4a0d9c"/><rect x="583.33" y="553.60" width="4.3" height="4.20" fill="#1a9f8b"/><rect x="583.33" y="557.80" width="4.3" height="0.80" fill="#b5259b"/><rect x="583.33" y="558.60" width="4.3" height="3.00" fill="#1f6cc6"/><rect x="589.03" y="447.60" width="4.3" height="35.40" fill="#efb12f"/><rect x="589.03" y="483.00" width="4.3" height="47.80" fill="#c0d160"/><rect x="589.03" y="530.80" width="4.3" height="22.20" fill="#4a0d9c"/><rect x="589.03" y="553.00" width="4.3" height="4.80" fill="#1a9f8b"/><rect x="589.03" y="557.80" width="4.3" height="0.80" fill="#b5259b"/><rect x="589.03" y="558.60" width="4.3" height="3.00" fill="#1f6cc6"/><rect x="594.72" y="425.10" width="4.3" height="38.90" fill="#efb12f"/><rect x="594.72" y="464.00" width="4.3" height="68.90" fill="#c0d160"/><rect x="594.72" y="532.90" width="4.3" height="19.10" fill="#4a0d9c"/><rect x="594.72" y="552.00" width="4.3" height="5.80" fill="#1a9f8b"/><rect x="594.72" y="557.80" width="4.3" height="0.80" fill="#b5259b"/><rect x="594.72" y="558.60" width="4.3" height="3.00" fill="#1f6cc6"/><rect x="600.42" y="406.90" width="4.3" height="44.10" fill="#efb12f"/><rect x="600.42" y="451.00" width="4.3" height="83.90" fill="#c0d160"/><rect x="600.42" y="534.90" width="4.3" height="16.10" fill="#4a0d9c"/><rect x="600.42" y="551.00" width="4.3" height="6.80" fill="#1a9f8b"/><rect x="600.42" y="557.80" width="4.3" height="0.80" fill="#b5259b"/><rect x="600.42" y="558.60" width="4.3" height="3.00" fill="#1f6cc6"/><rect x="606.12" y="394.90" width="4.3" height="50.20" fill="#efb12f"/><rect x="606.12" y="445.10" width="4.3" height="87.80" fill="#c0d160"/><rect x="606.12" y="532.90" width="4.3" height="16.10" fill="#4a0d9c"/><rect x="606.12" y="549.00" width="4.3" height="8.80" fill="#1a9f8b"/><rect x="606.12" y="557.80" width="4.3" height="0.80" fill="#b5259b"/><rect x="606.12" y="558.60" width="4.3" height="3.00" fill="#1f6cc6"/><rect x="611.82" y="384.40" width="4.3" height="64.00" fill="#efb12f"/><rect x="611.82" y="448.40" width="4.3" height="83.60" fill="#c0d160"/><rect x="611.82" y="532.00" width="4.3" height="16.00" fill="#4a0d9c"/><rect x="611.82" y="548.00" width="4.3" height="9.80" fill="#1a9f8b"/><rect x="611.82" y="557.80" width="4.3" height="0.80" fill="#b5259b"/><rect x="611.82" y="558.60" width="4.3" height="3.00" fill="#1f6cc6"/><rect x="617.52" y="381.70" width="4.3" height="72.30" fill="#efb12f"/><rect x="617.52" y="454.00" width="4.3" height="78.00" fill="#c0d160"/><rect x="617.52" y="532.00" width="4.3" height="15.00" fill="#4a0d9c"/><rect x="617.52" y="547.00" width="4.3" height="10.80" fill="#1a9f8b"/><rect x="617.52" y="557.80" width="4.3" height="0.80" fill="#b5259b"/><rect x="617.52" y="558.60" width="4.3" height="3.00" fill="#1f6cc6"/><rect x="623.21" y="385.30" width="4.3" height="71.70" fill="#efb12f"/><rect x="623.21" y="457.00" width="4.3" height="73.80" fill="#c0d160"/><rect x="623.21" y="530.80" width="4.3" height="16.20" fill="#4a0d9c"/><rect x="623.21" y="547.00" width="4.3" height="10.80" fill="#1a9f8b"/><rect x="623.21" y="557.80" width="4.3" height="0.80" fill="#b5259b"/><rect x="623.21" y="558.60" width="4.3" height="3.00" fill="#1f6cc6"/><rect x="628.91" y="377.30" width="4.3" height="81.70" fill="#efb12f"/><rect x="628.91" y="459.00" width="4.3" height="73.60" fill="#c0d160"/><rect x="628.91" y="532.60" width="4.3" height="15.00" fill="#4a0d9c"/><rect x="628.91" y="547.60" width="4.3" height="9.20" fill="#1a9f8b"/><rect x="628.91" y="556.80" width="4.3" height="0.70" fill="#b5259b"/><rect x="628.91" y="557.50" width="4.3" height="4.10" fill="#1f6cc6"/><rect x="634.61" y="369.20" width="4.3" height="90.10" fill="#efb12f"/><rect x="634.61" y="459.30" width="4.3" height="76.10" fill="#c0d160"/><rect x="634.61" y="535.40" width="4.3" height="12.60" fill="#4a0d9c"/><rect x="634.61" y="548.00" width="4.3" height="8.30" fill="#1a9f8b"/><rect x="634.61" y="556.30" width="4.3" height="0.70" fill="#b5259b"/><rect x="634.61" y="557.00" width="4.3" height="4.60" fill="#1f6cc6"/><rect x="640.31" y="362.60" width="4.3" height="94.90" fill="#efb12f"/><rect x="640.31" y="457.50" width="4.3" height="79.90" fill="#c0d160"/><rect x="640.31" y="537.40" width="4.3" height="10.60" fill="#4a0d9c"/><rect x="640.31" y="548.00" width="4.3" height="7.50" fill="#1a9f8b"/><rect x="640.31" y="555.50" width="4.3" height="0.80" fill="#b5259b"/><rect x="640.31" y="556.30" width="4.3" height="5.30" fill="#1f6cc6"/><rect x="646.01" y="380.70" width="4.3" height="85.30" fill="#efb12f"/><rect x="646.01" y="466.00" width="4.3" height="72.00" fill="#c0d160"/><rect x="646.01" y="538.00" width="4.3" height="9.60" fill="#4a0d9c"/><rect x="646.01" y="547.60" width="4.3" height="7.40" fill="#1a9f8b"/><rect x="646.01" y="555.00" width="4.3" height="0.90" fill="#b5259b"/><rect x="646.01" y="555.90" width="4.3" height="5.70" fill="#1f6cc6"/><rect x="651.70" y="375.40" width="4.3" height="88.60" fill="#efb12f"/><rect x="651.70" y="464.00" width="4.3" height="74.60" fill="#c0d160"/><rect x="651.70" y="538.60" width="4.3" height="8.40" fill="#4a0d9c"/><rect x="651.70" y="547.00" width="4.3" height="6.60" fill="#1a9f8b"/><rect x="651.70" y="553.60" width="4.3" height="1.80" fill="#b5259b"/><rect x="651.70" y="555.40" width="4.3" height="6.20" fill="#1f6cc6"/><rect x="657.40" y="344.10" width="4.3" height="107.70" fill="#efb12f"/><rect x="657.40" y="451.80" width="4.3" height="82.90" fill="#c0d160"/><rect x="657.40" y="534.70" width="4.3" height="8.10" fill="#4a0d9c"/><rect x="657.40" y="542.80" width="4.3" height="9.00" fill="#1a9f8b"/><rect x="657.40" y="551.80" width="4.3" height="2.40" fill="#b5259b"/><rect x="657.40" y="554.20" width="4.3" height="7.40" fill="#1f6cc6"/><rect x="663.10" y="349.00" width="4.3" height="109.50" fill="#efb12f"/><rect x="663.10" y="458.50" width="4.3" height="75.30" fill="#c0d160"/><rect x="663.10" y="533.80" width="4.3" height="8.40" fill="#4a0d9c"/><rect x="663.10" y="542.20" width="4.3" height="9.00" fill="#1a9f8b"/><rect x="663.10" y="551.20" width="4.3" height="3.00" fill="#b5259b"/><rect x="663.10" y="554.20" width="4.3" height="7.40" fill="#1f6cc6"/><rect x="668.80" y="376.40" width="4.3" height="92.60" fill="#efb12f"/><rect x="668.80" y="469.00" width="4.3" height="66.90" fill="#c0d160"/><rect x="668.80" y="535.90" width="4.3" height="8.10" fill="#4a0d9c"/><rect x="668.80" y="544.00" width="4.3" height="8.20" fill="#1a9f8b"/><rect x="668.80" y="552.20" width="4.3" height="2.60" fill="#b5259b"/><rect x="668.80" y="554.80" width="4.3" height="6.80" fill="#1f6cc6"/><rect x="674.50" y="396.90" width="4.3" height="82.80" fill="#efb12f"/><rect x="674.50" y="479.70" width="4.3" height="58.30" fill="#c0d160"/><rect x="674.50" y="538.00" width="4.3" height="8.40" fill="#4a0d9c"/><rect x="674.50" y="546.40" width="4.3" height="8.40" fill="#1a9f8b"/><rect x="674.50" y="554.80" width="4.3" height="1.80" fill="#b5259b"/><rect x="674.50" y="556.60" width="4.3" height="5.00" fill="#1f6cc6"/><rect x="680.19" y="422.00" width="4.3" height="69.70" fill="#efb12f"/><rect x="680.19" y="491.70" width="4.3" height="49.30" fill="#c0d160"/><rect x="680.19" y="541.00" width="4.3" height="7.20" fill="#4a0d9c"/><rect x="680.19" y="548.20" width="4.3" height="7.60" fill="#1a9f8b"/><rect x="680.19" y="555.80" width="4.3" height="2.00" fill="#b5259b"/><rect x="680.19" y="557.80" width="4.3" height="3.80" fill="#1f6cc6"/><rect x="685.89" y="442.60" width="4.3" height="56.20" fill="#efb12f"/><rect x="685.89" y="498.80" width="4.3" height="44.00" fill="#c0d160"/><rect x="685.89" y="542.80" width="4.3" height="6.00" fill="#4a0d9c"/><rect x="685.89" y="548.80" width="4.3" height="7.80" fill="#1a9f8b"/><rect x="685.89" y="556.60" width="4.3" height="2.40" fill="#b5259b"/><rect x="685.89" y="559.00" width="4.3" height="2.60" fill="#1f6cc6"/><rect x="691.59" y="453.70" width="4.3" height="45.70" fill="#efb12f"/><rect x="691.59" y="499.40" width="4.3" height="42.80" fill="#c0d160"/><rect x="691.59" y="542.20" width="4.3" height="6.60" fill="#4a0d9c"/><rect x="691.59" y="548.80" width="4.3" height="8.40" fill="#1a9f8b"/><rect x="691.59" y="557.20" width="4.3" height="2.20" fill="#b5259b"/><rect x="691.59" y="559.40" width="4.3" height="2.20" fill="#1f6cc6"/><rect x="697.29" y="445.70" width="4.3" height="49.30" fill="#efb12f"/><rect x="697.29" y="495.00" width="4.3" height="46.40" fill="#c0d160"/><rect x="697.29" y="541.40" width="4.3" height="6.80" fill="#4a0d9c"/><rect x="697.29" y="548.20" width="4.3" height="9.60" fill="#1a9f8b"/><rect x="697.29" y="557.80" width="4.3" height="1.80" fill="#b5259b"/><rect x="697.29" y="559.60" width="4.3" height="2.00" fill="#1f6cc6"/><rect x="702.99" y="442.20" width="4.3" height="48.00" fill="#efb12f"/><rect x="702.99" y="490.20" width="4.3" height="50.20" fill="#c0d160"/><rect x="702.99" y="540.40" width="4.3" height="7.20" fill="#4a0d9c"/><rect x="702.99" y="547.60" width="4.3" height="10.20" fill="#1a9f8b"/><rect x="702.99" y="557.80" width="4.3" height="1.80" fill="#b5259b"/><rect x="702.99" y="559.60" width="4.3" height="2.00" fill="#1f6cc6"/><rect x="708.68" y="432.20" width="4.3" height="50.30" fill="#efb12f"/><rect x="708.68" y="482.50" width="4.3" height="55.50" fill="#c0d160"/><rect x="708.68" y="538.00" width="4.3" height="8.40" fill="#4a0d9c"/><rect x="708.68" y="546.40" width="4.3" height="11.40" fill="#1a9f8b"/><rect x="708.68" y="557.80" width="4.3" height="1.60" fill="#b5259b"/><rect x="708.68" y="559.40" width="4.3" height="2.20" fill="#1f6cc6"/><rect x="714.38" y="416.00" width="4.3" height="52.70" fill="#efb12f"/><rect x="714.38" y="468.70" width="4.3" height="63.30" fill="#c0d160"/><rect x="714.38" y="532.00" width="4.3" height="12.60" fill="#4a0d9c"/><rect x="714.38" y="544.60" width="4.3" height="12.60" fill="#1a9f8b"/><rect x="714.38" y="557.20" width="4.3" height="1.80" fill="#b5259b"/><rect x="714.38" y="559.00" width="4.3" height="2.60" fill="#1f6cc6"/><rect x="720.08" y="394.60" width="4.3" height="56.30" fill="#efb12f"/><rect x="720.08" y="450.90" width="4.3" height="73.90" fill="#c0d160"/><rect x="720.08" y="524.80" width="4.3" height="18.60" fill="#4a0d9c"/><rect x="720.08" y="543.40" width="4.3" height="12.60" fill="#1a9f8b"/><rect x="720.08" y="556.00" width="4.3" height="4.20" fill="#b5259b"/><rect x="720.08" y="560.20" width="4.3" height="1.40" fill="#1f6cc6"/><rect x="725.78" y="383.80" width="4.3" height="59.20" fill="#efb12f"/><rect x="725.78" y="443.00" width="4.3" height="72.20" fill="#c0d160"/><rect x="725.78" y="515.20" width="4.3" height="25.80" fill="#4a0d9c"/><rect x="725.78" y="541.00" width="4.3" height="13.80" fill="#1a9f8b"/><rect x="725.78" y="554.80" width="4.3" height="5.40" fill="#b5259b"/><rect x="725.78" y="560.20" width="4.3" height="1.40" fill="#1f6cc6"/><rect x="731.48" y="361.80" width="4.3" height="62.70" fill="#efb12f"/><rect x="731.48" y="424.50" width="4.3" height="72.30" fill="#c0d160"/><rect x="731.48" y="496.80" width="4.3" height="41.80" fill="#4a0d9c"/><rect x="731.48" y="538.60" width="4.3" height="15.60" fill="#1a9f8b"/><rect x="731.48" y="554.20" width="4.3" height="6.00" fill="#b5259b"/><rect x="731.48" y="560.20" width="4.3" height="1.40" fill="#1f6cc6"/><rect x="737.17" y="332.80" width="4.3" height="66.80" fill="#efb12f"/><rect x="737.17" y="399.60" width="4.3" height="71.00" fill="#c0d160"/><rect x="737.17" y="470.60" width="4.3" height="66.20" fill="#4a0d9c"/><rect x="737.17" y="536.80" width="4.3" height="16.80" fill="#1a9f8b"/><rect x="737.17" y="553.60" width="4.3" height="6.60" fill="#b5259b"/><rect x="737.17" y="560.20" width="4.3" height="1.40" fill="#1f6cc6"/><rect x="742.87" y="311.90" width="4.3" height="59.90" fill="#efb12f"/><rect x="742.87" y="371.80" width="4.3" height="66.20" fill="#c0d160"/><rect x="742.87" y="438.00" width="4.3" height="98.80" fill="#4a0d9c"/><rect x="742.87" y="536.80" width="4.3" height="16.80" fill="#1a9f8b"/><rect x="742.87" y="553.60" width="4.3" height="6.60" fill="#b5259b"/><rect x="742.87" y="560.20" width="4.3" height="1.40" fill="#1f6cc6"/><rect x="748.57" y="311.90" width="4.3" height="58.00" fill="#efb12f"/><rect x="748.57" y="369.90" width="4.3" height="50.80" fill="#c0d160"/><rect x="748.57" y="420.70" width="4.3" height="118.50" fill="#4a0d9c"/><rect x="748.57" y="539.20" width="4.3" height="14.40" fill="#1a9f8b"/><rect x="748.57" y="553.60" width="4.3" height="6.60" fill="#b5259b"/><rect x="748.57" y="560.20" width="4.3" height="1.40" fill="#1f6cc6"/><rect x="754.27" y="321.90" width="4.3" height="53.70" fill="#efb12f"/><rect x="754.27" y="375.60" width="4.3" height="40.30" fill="#c0d160"/><rect x="754.27" y="415.90" width="4.3" height="125.70" fill="#4a0d9c"/><rect x="754.27" y="541.60" width="4.3" height="12.60" fill="#1a9f8b"/><rect x="754.27" y="554.20" width="4.3" height="6.00" fill="#b5259b"/><rect x="754.27" y="560.20" width="4.3" height="1.40" fill="#1f6cc6"/><rect x="759.97" y="350.70" width="4.3" height="52.70" fill="#efb12f"/><rect x="759.97" y="403.40" width="4.3" height="30.70" fill="#c0d160"/><rect x="759.97" y="434.10" width="4.3" height="109.90" fill="#4a0d9c"/><rect x="759.97" y="544.00" width="4.3" height="10.20" fill="#1a9f8b"/><rect x="759.97" y="554.20" width="4.3" height="6.00" fill="#b5259b"/><rect x="759.97" y="560.20" width="4.3" height="1.40" fill="#1f6cc6"/><rect x="765.66" y="377.50" width="4.3" height="55.70" fill="#efb12f"/><rect x="765.66" y="433.20" width="4.3" height="23.60" fill="#c0d160"/><rect x="765.66" y="456.80" width="4.3" height="87.80" fill="#4a0d9c"/><rect x="765.66" y="544.60" width="4.3" height="9.60" fill="#1a9f8b"/><rect x="765.66" y="554.20" width="4.3" height="6.00" fill="#b5259b"/><rect x="765.66" y="560.20" width="4.3" height="1.40" fill="#1f6cc6"/><rect x="771.36" y="406.00" width="4.3" height="51.20" fill="#efb12f"/><rect x="771.36" y="457.20" width="4.3" height="20.70" fill="#c0d160"/><rect x="771.36" y="477.90" width="4.3" height="66.10" fill="#4a0d9c"/><rect x="771.36" y="544.00" width="4.3" height="10.20" fill="#1a9f8b"/><rect x="771.36" y="554.20" width="4.3" height="6.00" fill="#b5259b"/><rect x="771.36" y="560.20" width="4.3" height="1.40" fill="#1f6cc6"/><rect x="777.06" y="429.30" width="4.3" height="50.90" fill="#efb12f"/><rect x="777.06" y="480.20" width="4.3" height="18.20" fill="#c0d160"/><rect x="777.06" y="498.40" width="4.3" height="45.60" fill="#4a0d9c"/><rect x="777.06" y="544.00" width="4.3" height="9.40" fill="#1a9f8b"/><rect x="777.06" y="553.40" width="4.3" height="6.10" fill="#b5259b"/><rect x="777.06" y="559.50" width="4.3" height="2.10" fill="#1f6cc6"/><rect x="782.76" y="445.30" width="4.3" height="49.30" fill="#efb12f"/><rect x="782.76" y="494.60" width="4.3" height="16.40" fill="#c0d160"/><rect x="782.76" y="511.00" width="4.3" height="32.40" fill="#4a0d9c"/><rect x="782.76" y="543.40" width="4.3" height="9.00" fill="#1a9f8b"/><rect x="782.76" y="552.40" width="4.3" height="4.80" fill="#b5259b"/><rect x="782.76" y="557.20" width="4.3" height="4.40" fill="#1f6cc6"/><rect x="788.46" y="450.50" width="4.3" height="49.90" fill="#efb12f"/><rect x="788.46" y="500.40" width="4.3" height="15.40" fill="#c0d160"/><rect x="788.46" y="515.80" width="4.3" height="25.80" fill="#4a0d9c"/><rect x="788.46" y="541.60" width="4.3" height="9.60" fill="#1a9f8b"/><rect x="788.46" y="551.20" width="4.3" height="4.80" fill="#b5259b"/><rect x="788.46" y="556.00" width="4.3" height="5.60" fill="#1f6cc6"/><rect x="794.15" y="447.00" width="4.3" height="49.50" fill="#efb12f"/><rect x="794.15" y="496.50" width="4.3" height="18.10" fill="#c0d160"/><rect x="794.15" y="514.60" width="4.3" height="24.60" fill="#4a0d9c"/><rect x="794.15" y="539.20" width="4.3" height="10.20" fill="#1a9f8b"/><rect x="794.15" y="549.40" width="4.3" height="5.40" fill="#b5259b"/><rect x="794.15" y="554.80" width="4.3" height="6.80" fill="#1f6cc6"/><rect x="799.85" y="441.80" width="4.3" height="43.20" fill="#efb12f"/><rect x="799.85" y="485.00" width="4.3" height="24.90" fill="#c0d160"/><rect x="799.85" y="509.90" width="4.3" height="26.10" fill="#4a0d9c"/><rect x="799.85" y="536.00" width="4.3" height="11.70" fill="#1a9f8b"/><rect x="799.85" y="547.70" width="4.3" height="5.80" fill="#b5259b"/><rect x="799.85" y="553.50" width="4.3" height="8.10" fill="#1f6cc6"/><rect x="805.55" y="419.00" width="4.3" height="49.90" fill="#efb12f"/><rect x="805.55" y="468.90" width="4.3" height="32.40" fill="#c0d160"/><rect x="805.55" y="501.30" width="4.3" height="31.30" fill="#4a0d9c"/><rect x="805.55" y="532.60" width="4.3" height="14.00" fill="#1a9f8b"/><rect x="805.55" y="546.60" width="4.3" height="6.50" fill="#b5259b"/><rect x="805.55" y="553.10" width="4.3" height="8.50" fill="#1f6cc6"/><rect x="811.25" y="405.30" width="4.3" height="43.10" fill="#efb12f"/><rect x="811.25" y="448.40" width="4.3" height="44.20" fill="#c0d160"/><rect x="811.25" y="492.60" width="4.3" height="36.80" fill="#4a0d9c"/><rect x="811.25" y="529.40" width="4.3" height="15.10" fill="#1a9f8b"/><rect x="811.25" y="544.50" width="4.3" height="8.60" fill="#b5259b"/><rect x="811.25" y="553.10" width="4.3" height="8.50" fill="#1f6cc6"/><rect x="816.95" y="397.00" width="4.3" height="50.50" fill="#efb12f"/><rect x="816.95" y="447.50" width="4.3" height="46.90" fill="#c0d160"/><rect x="816.95" y="494.40" width="4.3" height="33.90" fill="#4a0d9c"/><rect x="816.95" y="528.30" width="4.3" height="15.10" fill="#1a9f8b"/><rect x="816.95" y="543.40" width="4.3" height="9.70" fill="#b5259b"/><rect x="816.95" y="553.10" width="4.3" height="8.50" fill="#1f6cc6"/><rect x="822.64" y="380.70" width="4.3" height="53.90" fill="#efb12f"/><rect x="822.64" y="434.60" width="4.3" height="48.30" fill="#c0d160"/><rect x="822.64" y="482.90" width="4.3" height="37.40" fill="#4a0d9c"/><rect x="822.64" y="520.30" width="4.3" height="18.80" fill="#1a9f8b"/><rect x="822.64" y="539.10" width="4.3" height="15.10" fill="#b5259b"/><rect x="822.64" y="554.20" width="4.3" height="7.40" fill="#1f6cc6"/><rect x="828.34" y="368.80" width="4.3" height="63.30" fill="#efb12f"/><rect x="828.34" y="432.10" width="4.3" height="48.70" fill="#c0d160"/><rect x="828.34" y="480.80" width="4.3" height="34.50" fill="#4a0d9c"/><rect x="828.34" y="515.30" width="4.3" height="22.70" fill="#1a9f8b"/><rect x="828.34" y="538.00" width="4.3" height="16.20" fill="#b5259b"/><rect x="828.34" y="554.20" width="4.3" height="7.40" fill="#1f6cc6"/><rect x="834.04" y="364.00" width="4.3" height="65.30" fill="#efb12f"/><rect x="834.04" y="429.30" width="4.3" height="52.50" fill="#c0d160"/><rect x="834.04" y="481.80" width="4.3" height="31.40" fill="#4a0d9c"/><rect x="834.04" y="513.20" width="4.3" height="20.50" fill="#1a9f8b"/><rect x="834.04" y="533.70" width="4.3" height="20.50" fill="#b5259b"/><rect x="834.04" y="554.20" width="4.3" height="7.40" fill="#1f6cc6"/><rect x="839.74" y="361.10" width="4.3" height="70.10" fill="#efb12f"/><rect x="839.74" y="431.20" width="4.3" height="53.90" fill="#c0d160"/><rect x="839.74" y="485.10" width="4.3" height="25.90" fill="#4a0d9c"/><rect x="839.74" y="511.00" width="4.3" height="20.50" fill="#1a9f8b"/><rect x="839.74" y="531.50" width="4.3" height="23.30" fill="#b5259b"/><rect x="839.74" y="554.80" width="4.3" height="6.80" fill="#1f6cc6"/><rect x="845.44" y="361.50" width="4.3" height="70.60" fill="#efb12f"/><rect x="845.44" y="432.10" width="4.3" height="53.60" fill="#c0d160"/><rect x="845.44" y="485.70" width="4.3" height="25.30" fill="#4a0d9c"/><rect x="845.44" y="511.00" width="4.3" height="20.10" fill="#1a9f8b"/><rect x="845.44" y="531.10" width="4.3" height="24.20" fill="#b5259b"/><rect x="845.44" y="555.30" width="4.3" height="6.30" fill="#1f6cc6"/><rect x="851.13" y="371.10" width="4.3" height="69.70" fill="#efb12f"/><rect x="851.13" y="440.80" width="4.3" height="52.30" fill="#c0d160"/><rect x="851.13" y="493.10" width="4.3" height="23.30" fill="#4a0d9c"/><rect x="851.13" y="516.40" width="4.3" height="17.30" fill="#1a9f8b"/><rect x="851.13" y="533.70" width="4.3" height="22.70" fill="#b5259b"/><rect x="851.13" y="556.40" width="4.3" height="5.20" fill="#1f6cc6"/><rect x="856.83" y="389.50" width="4.3" height="61.90" fill="#efb12f"/><rect x="856.83" y="451.40" width="4.3" height="51.00" fill="#c0d160"/><rect x="856.83" y="502.40" width="4.3" height="18.30" fill="#4a0d9c"/><rect x="856.83" y="520.70" width="4.3" height="15.10" fill="#1a9f8b"/><rect x="856.83" y="535.80" width="4.3" height="21.20" fill="#b5259b"/><rect x="856.83" y="557.00" width="4.3" height="4.60" fill="#1f6cc6"/><rect x="862.53" y="401.40" width="4.3" height="61.00" fill="#efb12f"/><rect x="862.53" y="462.40" width="4.3" height="48.60" fill="#c0d160"/><rect x="862.53" y="511.00" width="4.3" height="16.20" fill="#4a0d9c"/><rect x="862.53" y="527.20" width="4.3" height="11.90" fill="#1a9f8b"/><rect x="862.53" y="539.10" width="4.3" height="18.80" fill="#b5259b"/><rect x="862.53" y="557.90" width="4.3" height="3.70" fill="#1f6cc6"/><rect x="868.23" y="409.10" width="4.3" height="60.90" fill="#efb12f"/><rect x="868.23" y="470.00" width="4.3" height="47.50" fill="#c0d160"/><rect x="868.23" y="517.50" width="4.3" height="15.10" fill="#4a0d9c"/><rect x="868.23" y="532.60" width="4.3" height="7.60" fill="#1a9f8b"/><rect x="868.23" y="540.20" width="4.3" height="18.30" fill="#b5259b"/><rect x="868.23" y="558.50" width="4.3" height="3.10" fill="#1f6cc6"/><rect x="873.93" y="426.20" width="4.3" height="48.80" fill="#efb12f"/><rect x="873.93" y="475.00" width="4.3" height="50.40" fill="#c0d160"/><rect x="873.93" y="525.40" width="4.3" height="11.80" fill="#4a0d9c"/><rect x="873.93" y="537.20" width="4.3" height="7.40" fill="#1a9f8b"/><rect x="873.93" y="544.60" width="4.3" height="14.40" fill="#b5259b"/><rect x="873.93" y="559.00" width="4.3" height="2.60" fill="#1f6cc6"/><rect x="879.62" y="434.20" width="4.3" height="39.60" fill="#efb12f"/><rect x="879.62" y="473.80" width="4.3" height="58.80" fill="#c0d160"/><rect x="879.62" y="532.60" width="4.3" height="9.60" fill="#4a0d9c"/><rect x="879.62" y="542.20" width="4.3" height="7.20" fill="#1a9f8b"/><rect x="879.62" y="549.40" width="4.3" height="9.60" fill="#b5259b"/><rect x="879.62" y="559.00" width="4.3" height="2.60" fill="#1f6cc6"/><rect x="885.32" y="437.80" width="4.3" height="32.40" fill="#efb12f"/><rect x="885.32" y="470.20" width="4.3" height="66.00" fill="#c0d160"/><rect x="885.32" y="536.20" width="4.3" height="9.60" fill="#4a0d9c"/><rect x="885.32" y="545.80" width="4.3" height="6.00" fill="#1a9f8b"/><rect x="885.32" y="551.80" width="4.3" height="7.20" fill="#b5259b"/><rect x="885.32" y="559.00" width="4.3" height="2.60" fill="#1f6cc6"/><rect x="891.02" y="432.30" width="4.3" height="31.90" fill="#efb12f"/><rect x="891.02" y="464.20" width="4.3" height="75.60" fill="#c0d160"/><rect x="891.02" y="539.80" width="4.3" height="7.20" fill="#4a0d9c"/><rect x="891.02" y="547.00" width="4.3" height="6.00" fill="#1a9f8b"/><rect x="891.02" y="553.00" width="4.3" height="6.00" fill="#b5259b"/><rect x="891.02" y="559.00" width="4.3" height="2.60" fill="#1f6cc6"/><rect x="896.72" y="427.80" width="4.3" height="31.60" fill="#efb12f"/><rect x="896.72" y="459.40" width="4.3" height="81.60" fill="#c0d160"/><rect x="896.72" y="541.00" width="4.3" height="7.20" fill="#4a0d9c"/><rect x="896.72" y="548.20" width="4.3" height="6.00" fill="#1a9f8b"/><rect x="896.72" y="554.20" width="4.3" height="5.80" fill="#b5259b"/><rect x="896.72" y="560.00" width="4.3" height="1.60" fill="#1f6cc6"/><rect x="902.42" y="424.10" width="4.3" height="29.30" fill="#efb12f"/><rect x="902.42" y="453.40" width="4.3" height="88.80" fill="#c0d160"/><rect x="902.42" y="542.20" width="4.3" height="6.80" fill="#4a0d9c"/><rect x="902.42" y="549.00" width="4.3" height="4.90" fill="#1a9f8b"/><rect x="902.42" y="553.90" width="4.3" height="6.50" fill="#b5259b"/><rect x="902.42" y="560.40" width="4.3" height="1.20" fill="#1f6cc6"/><rect x="908.11" y="412.10" width="4.3" height="32.90" fill="#efb12f"/><rect x="908.11" y="445.00" width="4.3" height="97.10" fill="#c0d160"/><rect x="908.11" y="542.10" width="4.3" height="6.80" fill="#4a0d9c"/><rect x="908.11" y="548.90" width="4.3" height="5.00" fill="#1a9f8b"/><rect x="908.11" y="553.90" width="4.3" height="6.30" fill="#b5259b"/><rect x="908.11" y="560.20" width="4.3" height="1.40" fill="#1f6cc6"/><rect x="913.81" y="395.40" width="4.3" height="37.60" fill="#efb12f"/><rect x="913.81" y="433.00" width="4.3" height="110.00" fill="#c0d160"/><rect x="913.81" y="543.00" width="4.3" height="6.10" fill="#4a0d9c"/><rect x="913.81" y="549.10" width="4.3" height="4.80" fill="#1a9f8b"/><rect x="913.81" y="553.90" width="4.3" height="6.10" fill="#b5259b"/><rect x="913.81" y="560.00" width="4.3" height="1.60" fill="#1f6cc6"/><rect x="919.51" y="386.20" width="4.3" height="33.60" fill="#efb12f"/><rect x="919.51" y="419.80" width="4.3" height="121.20" fill="#c0d160"/><rect x="919.51" y="541.00" width="4.3" height="5.40" fill="#4a0d9c"/><rect x="919.51" y="546.40" width="4.3" height="4.90" fill="#1a9f8b"/><rect x="919.51" y="551.30" width="4.3" height="7.40" fill="#b5259b"/><rect x="919.51" y="558.70" width="4.3" height="2.90" fill="#1f6cc6"/><rect x="925.21" y="376.20" width="4.3" height="40.30" fill="#efb12f"/><rect x="925.21" y="416.50" width="4.3" height="124.50" fill="#c0d160"/><rect x="925.21" y="541.00" width="4.3" height="5.20" fill="#4a0d9c"/><rect x="925.21" y="546.20" width="4.3" height="4.20" fill="#1a9f8b"/><rect x="925.21" y="550.40" width="4.3" height="6.20" fill="#b5259b"/><rect x="925.21" y="556.60" width="4.3" height="5.00" fill="#1f6cc6"/><rect x="930.91" y="373.00" width="4.3" height="43.50" fill="#efb12f"/><rect x="930.91" y="416.50" width="4.3" height="120.90" fill="#c0d160"/><rect x="930.91" y="537.40" width="4.3" height="3.80" fill="#4a0d9c"/><rect x="930.91" y="541.20" width="4.3" height="6.50" fill="#1a9f8b"/><rect x="930.91" y="547.70" width="4.3" height="6.50" fill="#b5259b"/><rect x="930.91" y="554.20" width="4.3" height="7.40" fill="#1f6cc6"/><rect x="936.60" y="361.40" width="4.3" height="46.50" fill="#efb12f"/><rect x="936.60" y="407.90" width="4.3" height="124.70" fill="#c0d160"/><rect x="936.60" y="532.60" width="4.3" height="3.60" fill="#4a0d9c"/><rect x="936.60" y="536.20" width="4.3" height="3.80" fill="#1a9f8b"/><rect x="936.60" y="540.00" width="4.3" height="10.40" fill="#b5259b"/><rect x="936.60" y="550.40" width="4.3" height="11.20" fill="#1f6cc6"/><rect x="942.30" y="322.50" width="4.3" height="71.00" fill="#efb12f"/><rect x="942.30" y="393.50" width="4.3" height="139.10" fill="#c0d160"/><rect x="942.30" y="532.60" width="4.3" height="3.40" fill="#4a0d9c"/><rect x="942.30" y="536.00" width="4.3" height="3.90" fill="#1a9f8b"/><rect x="942.30" y="539.90" width="4.3" height="10.20" fill="#b5259b"/><rect x="942.30" y="550.10" width="4.3" height="11.50" fill="#1f6cc6"/><rect x="948.00" y="454.6" width="4.3" height="15.40" fill="url(#hy)"/><rect x="948.00" y="470" width="4.3" height="79.40" fill="url(#hg)"/><rect x="948.00" y="549.4" width="4.3" height="12.20" fill="url(#hb)"/></svg>
</body></html>
